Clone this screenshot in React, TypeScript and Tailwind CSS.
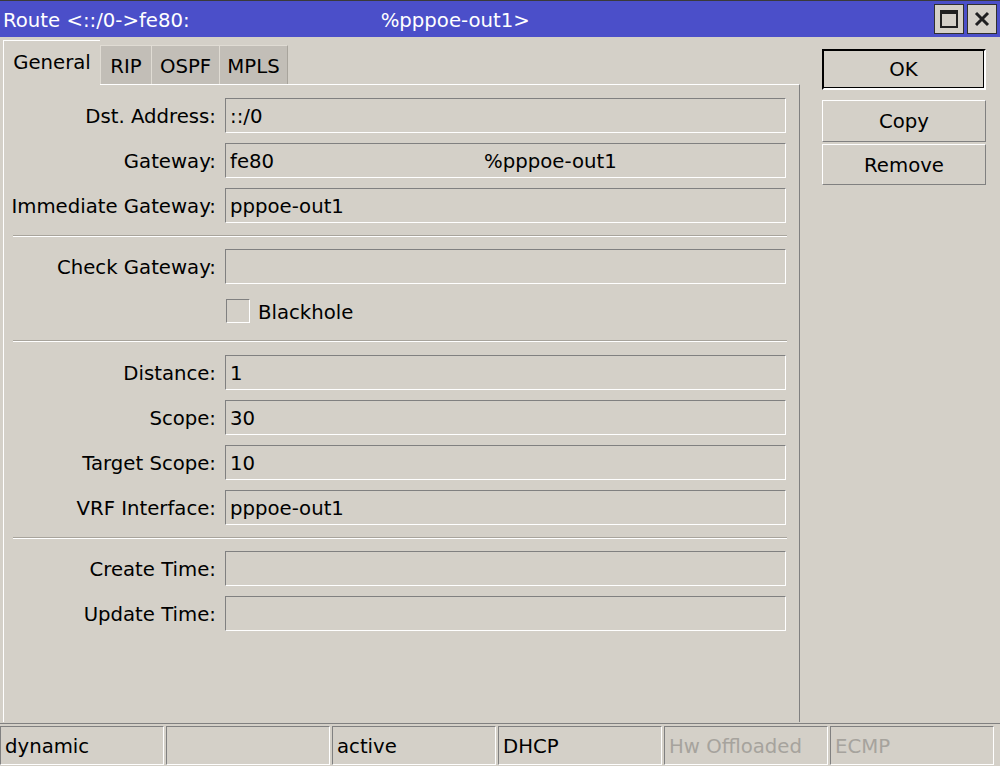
import React from "react";

const font = { fontFamily: '"DejaVu Sans", Verdana, sans-serif' };

function Field({ label, children }: { label: string; children?: React.ReactNode }) {
  return (
    <div className="flex h-[35px] items-center">
      <div className="w-[221px] pt-[3px] pr-[9px] text-right whitespace-nowrap">{label}</div>
      <div className="flex h-[35px] w-[561px] items-center border border-t-[#808080] border-l-[#808080] border-b-white border-r-white pt-[3px] pl-[4px]">
        {children}
      </div>
    </div>
  );
}

function Separator() {
  return (
    <div className="ml-[9px] w-[774px] border-t border-b border-t-[#a8a49c] border-b-white" />
  );
}

function StatusCell({ text, muted }: { text?: string; muted?: boolean }) {
  return (
    <div
      className={
        "flex h-[39px] w-[164px] items-center border border-t-[#808080] border-l-[#808080] border-b-white border-r-white pt-[2px] pl-[4px] " +
        (muted ? "text-[#a6a39d]" : "text-black")
      }
    >
      {text}
    </div>
  );
}

export default function App() {
  return (
    <div
      className="flex h-[766px] w-[1000px] flex-col overflow-hidden bg-[#d4d0c8] text-[19.7px] text-black"
      style={font}
    >
      {/* title bar */}
      <div className="flex h-[37px] shrink-0 items-center border-t border-[#3a3a3a] bg-[#4b4fc9] pl-[3px] pr-[3px] text-white">
        <span className="pt-[3px]">Route &lt;::/0-&gt;fe80:</span>
        <span className="ml-[191px] pt-[3px]">%pppoe-out1&gt;</span>
        <div className="ml-auto flex gap-[3px]">
          <div className="flex h-[30px] w-[30px] items-center justify-center border border-[#303030] bg-[#d4d0c8]">
            <div className="h-[18px] w-[18px] border-2 border-t-[4px] border-[#202020]" />
          </div>
          <div className="flex h-[30px] w-[30px] items-center justify-center border border-[#303030] bg-[#d4d0c8]">
            <svg width="16" height="16" viewBox="0 0 16 16">
              <path d="M2 2 L14 14 M14 2 L2 14" stroke="#202020" strokeWidth="3" />
            </svg>
          </div>
        </div>
      </div>

      <div className="flex flex-1">
        {/* left: tabs + panel */}
        <div className="flex w-[800px] flex-col pl-[3px] pt-[2px]">
          <div className="flex h-[45px] items-end">
            <div className="relative z-10 -mb-px flex h-[45px] w-[97px] items-center justify-center border-t border-l border-white bg-[#d4d0c8]">
              General
            </div>
            <div className="flex h-[39px] w-[51px] items-center justify-center border-t border-l border-[#e0dcd4] bg-[#c2beb7] pt-[3px]">
              RIP
            </div>
            <div className="flex h-[39px] w-[68px] items-center justify-center border-t border-l border-[#e0dcd4] bg-[#c2beb7] pt-[3px]">
              OSPF
            </div>
            <div className="flex h-[39px] w-[69px] items-center justify-center border-t border-l border-r border-[#e0dcd4] border-r-[#a8a49c] bg-[#c2beb7] pt-[3px]">
              MPLS
            </div>
          </div>
          <div className="mb-[1px] flex flex-1 flex-col border-t border-l border-r border-t-white border-l-white border-r-[#808080] pt-[13px]">
            <div className="flex flex-col gap-[10px]">
              <Field label="Dst. Address:">::/0</Field>
              <Field label="Gateway:">
                <span>fe80</span>
                <span className="ml-[210px]">%pppoe-out1</span>
              </Field>
              <Field label="Immediate Gateway:">pppoe-out1</Field>
            </div>
            <div className="mt-[12px] mb-[12px]">
              <Separator />
            </div>
            <Field label="Check Gateway:" />
            <div className="ml-[222px] mt-[15px] flex h-[24px] items-center">
              <div className="h-[24px] w-[24px] border border-t-[#808080] border-l-[#808080] border-b-white border-r-white" />
              <span className="ml-[8px] pt-[4px]">Blackhole</span>
            </div>
            <div className="mt-[17px] mb-[13px]">
              <Separator />
            </div>
            <div className="flex flex-col gap-[10px]">
              <Field label="Distance:">1</Field>
              <Field label="Scope:">30</Field>
              <Field label="Target Scope:">10</Field>
              <Field label="VRF Interface:">pppoe-out1</Field>
            </div>
            <div className="mt-[12px] mb-[12px]">
              <Separator />
            </div>
            <div className="flex flex-col gap-[10px]">
              <Field label="Create Time:" />
              <Field label="Update Time:" />
            </div>
          </div>
        </div>

        {/* right: buttons */}
        <div className="flex flex-col pl-[22px] pt-[12px]">
          <button className="flex h-[41px] w-[164px] items-center justify-center border-2 border-black border-r-white border-b-white outline-none">
            <span className="flex h-full w-full items-center justify-center border-r border-b border-black pt-[2px]">OK</span>
          </button>
          <button className="mt-[10px] flex h-[42px] w-[164px] items-center justify-center border border-t-white border-l-white border-b-[#808080] border-r-[#808080] pt-[2px]">
            Copy
          </button>
          <button className="mt-[2px] flex h-[41px] w-[164px] items-center justify-center border border-t-white border-l-white border-b-[#808080] border-r-[#808080] pt-[2px]">
            Remove
          </button>
        </div>
      </div>

      {/* status bar */}
      <div className="flex h-[43px] shrink-0 gap-[2px] border-t border-[#808080] pt-[2px]">
        <StatusCell text="dynamic" />
        <StatusCell />
        <StatusCell text="active" />
        <StatusCell text="DHCP" />
        <StatusCell text="Hw Offloaded" muted />
        <StatusCell text="ECMP" muted />
      </div>
    </div>
  );
}
